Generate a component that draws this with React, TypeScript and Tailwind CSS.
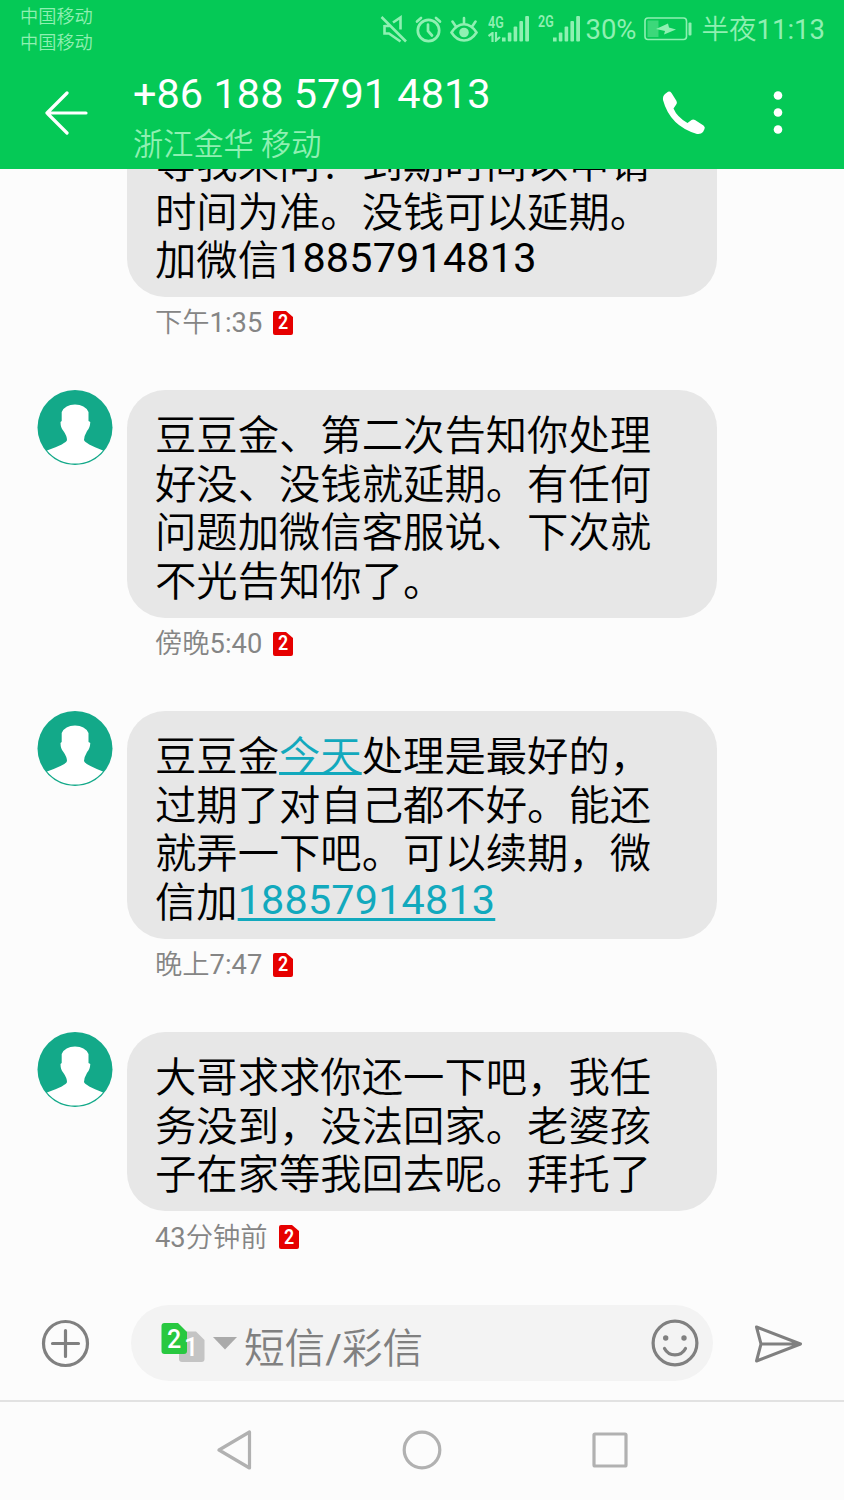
import React from "react";

type Part = { text: string; link?: boolean; latin?: boolean };

type MessageType = {
    id: number;
    lines: Part[][];
    time: string[];
    avatar: boolean;
}

const messages: MessageType[] = [
    {
        id: 1,
        avatar: false,
        lines: [
            [{ text: "等我来问？到期时间以申请" }],
            [{ text: "时间为准。没钱可以延期。" }],
            [{ text: "加微信" }, { text: "18857914813", latin: true }],
        ],
        time: ["下午", "1:35"],
    },
    {
        id: 2,
        avatar: true,
        lines: [
            [{ text: "豆豆金、第二次告知你处理" }],
            [{ text: "好没、没钱就延期。有任何" }],
            [{ text: "问题加微信客服说、下次就" }],
            [{ text: "不光告知你了。" }],
        ],
        time: ["傍晚", "5:40"],
    },
    {
        id: 3,
        avatar: true,
        lines: [
            [{ text: "豆豆金" }, { text: "今天", link: true }, { text: "处理是最好的，" }],
            [{ text: "过期了对自己都不好。能还" }],
            [{ text: "就弄一下吧。可以续期，微" }],
            [{ text: "信加" }, { text: "18857914813", link: true, latin: true }],
        ],
        time: ["晚上", "7:47"],
    },
    {
        id: 4,
        avatar: true,
        lines: [
            [{ text: "大哥求求你还一下吧，我任" }],
            [{ text: "务没到，没法回家。老婆孩" }],
            [{ text: "子在家等我回去呢。拜托了" }],
        ],
        time: ["", "43", "分钟前"],
    },
];

const Signal = () => (
    <svg width="28" height="26" viewBox="0 0 28 26" fill="currentColor">
        <rect x="0" y="21.5" width="3.6" height="4" />
        <rect x="5.8" y="16.5" width="3.6" height="9" rx="1" />
        <rect x="11.6" y="10.5" width="3.6" height="15" rx="1" />
        <rect x="17.4" y="5" width="3.6" height="20.5" rx="1" />
        <rect x="23.2" y="0" width="3.8" height="25.5" rx="1" />
    </svg>
);

const StatusBar = () => (
    <div className="flex h-[58px] justify-between pl-5 pr-[19px] text-[#8ff0b2]">
        <div className="pt-[4px] text-[18.2px] font-[350] leading-[25.5px]">
            <div>中国移动</div>
            <div>中国移动</div>
        </div>
        <div className="flex items-center">
            <svg className="mr-[8px]" width="27" height="28" viewBox="0 0 27 28" fill="none" stroke="currentColor" strokeWidth="2.6">
                <path d="M1.5 2L26 26.5M4.5 10V18.5H9L20.5 26.5M4.5 11H10M13 7.5L20.5 2.5V14.5" />
            </svg>
            <svg className="mr-[8px]" width="27" height="27" viewBox="0 0 27 27" fill="none" stroke="currentColor" strokeWidth="2.7" strokeLinecap="round">
                <circle cx="13.5" cy="14.5" r="10.7" />
                <path d="M2 5.5L6 2M25 5.5L21 2M13 8.5V15l4 4.5" />
            </svg>
            <svg className="mr-[10px]" width="28" height="27" viewBox="0 0 28 27" fill="none" stroke="currentColor" strokeWidth="2.6" strokeLinecap="round">
                <path d="M1.5 16.5C5 11 9 8.3 14 8.3s9 2.7 12.5 8.2C23 22 19 24.5 14 24.5S5 22 1.5 16.5ZM14 8V2M5.500 10L2.500 5.500M22.500 10L25.500 5.500" />
                <circle cx="14" cy="16.5" r="4.8" fill="currentColor" stroke="none" />
            </svg>
            <div className="flex items-end">
                <div className="flex w-[14px] flex-col items-start gap-[3px]">
                    <span className="origin-left scale-x-[0.78] text-[16px] font-semibold leading-[13px]">4G</span>
                    <svg width="13" height="10" viewBox="0 0 13 10" fill="none" stroke="currentColor" strokeWidth="2.2">
                        <path d="M.5 4L4.5 1V10M8 0V8.5L12 5" />
                    </svg>
                </div>
                <Signal />
            </div>
            <div className="ml-[8px] flex items-start">
                <span className="w-[15px] origin-left scale-x-[0.78] text-[16px] font-semibold leading-[12px]">2G</span>
                <Signal />
            </div>
            <span className="ml-[4px] pt-[2px] text-[27.5px] leading-none">30%</span>
            <svg className="ml-[7px]" width="48" height="24" viewBox="0 0 48 24">
                <rect x="1" y="1" width="41.5" height="21.5" rx="3" fill="none" stroke="currentColor" strokeWidth="1.6" />
                <rect x="3.5" y="3.5" width="11" height="16.5" fill="currentColor" opacity="0.4" />
                <path d="M12 12L24 6.5L25 10.5L32 12.5L20 17.5L21 14Z" fill="currentColor" />
                <rect x="44.5" y="5.5" width="3" height="13" rx="1" fill="currentColor" />
            </svg>
            <span className="ml-[10px] whitespace-nowrap pt-[2px] text-[27.5px] leading-none">
                <span className="font-[350]">半夜</span>11:13
            </span>
        </div>
    </div>
);

const Header = () => (
    <header className="z-10 h-[169px] shrink-0 bg-[#05c956]">
        <StatusBar />
        <div className="flex h-[110px] items-center pl-[45px]">
            <svg width="43" height="44" viewBox="0 0 43 44" fill="none" stroke="#fff" strokeWidth="3.2" strokeLinecap="round" strokeLinejoin="round">
                <path d="M41 22H2M22 2L2 22L22 42" />
            </svg>
            <div className="ml-[45px] w-[530px] pt-[9px]">
                <div className="whitespace-nowrap text-[41.5px] leading-[50px] text-white">+86 188 5791 4813</div>
                <div className="pt-[3px] text-[30.2px] font-[350] leading-[45px] text-[#8ff0b2]">浙江金华 移动</div>
            </div>
            <svg className="-ml-px" width="45" height="44" viewBox="0 0 45 44" fill="#fff">
                <path d="M3 3L6 .8Q8 0 9.5 2L14.5 10Q15.5 12 14.2 13.5L11.5 17.5Q15 26 25.5 32L29.5 29Q31 28 33 29L41.5 34.5Q43.5 36 42.5 38L41 41Q39 43.5 35 43Q8 35 1 9Q.5 5 3 3Z" />
            </svg>
            <svg className="ml-[66px]" width="10" height="44" viewBox="0 0 10 44" fill="#fff">
                <circle cx="5" cy="4.5" r="4.3" />
                <circle cx="5" cy="21.5" r="4.3" />
                <circle cx="5" cy="38.5" r="4.3" />
            </svg>
        </div>
    </header>
);

const Avatar = () => (
    <svg width="76" height="76" viewBox="0 0 76 76">
        <circle cx="38" cy="37.5" r="37.5" fill="#13a989" />
        <path d="M10 60.500Q29.500 53.500 30 50Q30 46 26.500 41Q23.500 38 23.500 32L24.700 31V22Q28 14.500 38 14.500T51.500 22V31L53.300 32Q53 38 50 41Q47 46 47 50Q48 53.500 66 60.500A36.500 36.500 0 0 1 10 60.500Z" fill="#fff" />
    </svg>
);

const SimBadge = () => (
    <span className="relative flex h-6 w-[20px] items-center justify-center text-white">
        <svg className="absolute inset-0" width="20" height="24" viewBox="0 0 20 24" fill="#e60000">
            <path d="M2 0H13L20 6V22Q20 24 18 24H2Q0 24 0 22V2Q0 0 2 0Z" />
        </svg>
        <span className="relative scale-x-[0.85] text-[21px] font-semibold leading-none">2</span>
    </span>
);

const LinePart = ({ part }: { part: Part }) => {
    if (part.link) {
        return part.latin
            ? <a className="relative -top-[3px] tracking-[0.18px] text-[#12a9bd] underline decoration-[2.5px] underline-offset-[4px]">{part.text}</a>
            : <a className="font-[350] text-[#12a9bd] underline decoration-[2.5px] underline-offset-[1px]">{part.text}</a>;
    }
    return part.latin
        ? <span className="relative -top-[3px] tracking-[0.18px]">{part.text}</span>
        : <span className="font-[350]">{part.text}</span>;
}

const Message = ({ data }: { data: MessageType }) => (
    <div className="flex h-fit shrink-0 pl-[37px]">
        <div className="w-[90px] shrink-0">{data.avatar && <Avatar />}</div>
        <div>
            <div className="w-[590px] rounded-[38px] bg-[#e7e7e7] pb-[11px] pl-[28px] pt-[22px] text-[41.35px] leading-[48.6px] text-black">
                {data.lines.map((line, i) => (
                    <p key={i} className="whitespace-nowrap">
                        {line.map((part, j) => <LinePart key={j} part={part} />)}
                    </p>
                ))}
            </div>
            <div className="flex h-[52px] items-center pl-[28px]">
                <span className="mr-[11px] pt-[2px] text-[27.3px] text-[#858585]">
                    <span className="font-[350]">{data.time[0]}</span>
                    {data.time[1]}
                    <span className="font-[350]">{data.time[2]}</span>
                </span>
                <SimBadge />
            </div>
        </div>
    </div>
);

const Composer = () => (
    <div className="flex h-[76px] shrink-0 items-center pl-[41px]">
        <svg width="49" height="49" viewBox="0 0 49 49" fill="none" stroke="#808080" strokeWidth="3.2" strokeLinecap="round">
            <circle cx="24.5" cy="24.5" r="22" />
            <path d="M24.5 11.5V37.5M11.5 24.5H37.5" />
        </svg>
        <div className="ml-[41px] flex h-[76px] w-[582px] items-center rounded-full bg-[#f3f3f3] pl-[30px]">
            <div className="relative h-[40px] w-[44px]">
                <svg className="absolute inset-0" width="44" height="40" viewBox="0 0 44 40">
                    <path d="M20 8.5H35L43.5 17V36Q43.5 39 40.5 39H21Q18 39 18 36V8.5Z" fill="#c4c4c4" />
                    <path d="M3.5 0H17L26 9V28Q26 31 23 31H3.5Q.5 31 .5 28V3Q.5 0 3.5 0Z" fill="#28c840" />
                </svg>
                <span className="absolute left-[6px] top-[3px] text-[25px] font-medium leading-[27px] text-white">2</span>
                <span className="absolute left-[23px] top-[11px] text-[25px] font-medium leading-[27px] text-white">1</span>
            </div>
            <svg className="ml-[8px]" width="24" height="13" viewBox="0 0 24 13" fill="#aaa">
                <path d="M0 0H24L12 12.5Z" />
            </svg>
            <span className="ml-[7px] w-[407px] whitespace-nowrap pt-[11px] text-[40.6px] font-[350] leading-[60px] text-[#808080]">
                短信<span className="font-normal">/</span>彩信
            </span>
            <svg className="shrink-0" width="48" height="48" viewBox="0 0 48 48" fill="none" stroke="#808080" strokeWidth="3.2" strokeLinecap="round">
                <circle cx="24" cy="24" r="21.9" />
                <path d="M13.5 29.5C18 38 30 38 34.5 29.5" />
                <circle cx="14.7" cy="19" r="2.7" fill="#808080" stroke="none" />
                <circle cx="33" cy="19" r="2.7" fill="#808080" stroke="none" />
            </svg>
        </div>
        <svg className="ml-[42px] mt-px" width="47" height="38" viewBox="0 0 47 38" fill="none" stroke="#808080" strokeWidth="3" strokeLinejoin="round">
            <path d="M1.5 2L45.5 19L1.5 36L6 19ZM6 19H45" />
        </svg>
    </div>
);

const NavBar = () => (
    <nav className="flex h-[100px] shrink-0 items-center justify-between border-t-2 border-[#e2e2e2] pb-[2px] pl-[217px] pr-[216px]">
        <svg width="35" height="40" viewBox="0 0 35 40" fill="none" stroke="#b1b1b1" strokeWidth="3.2" strokeLinejoin="round">
            <path d="M2 20L32.5 2V38Z" />
        </svg>
        <svg width="40" height="40" viewBox="0 0 40 40" fill="none" stroke="#b1b1b1" strokeWidth="3.2">
            <circle cx="20" cy="20" r="17.8" />
        </svg>
        <svg width="36" height="36" viewBox="0 0 36 36" fill="none" stroke="#b1b1b1" strokeWidth="3.2" strokeLinejoin="round">
            <rect x="2" y="2" width="32" height="32" rx="1" />
        </svg>
    </nav>
);

const App = () => {
    return (
        <div className="flex h-[1500px] w-[844px] flex-col overflow-hidden bg-[#fcfcfc] font-[Roboto,'Noto_Sans_CJK_SC',sans-serif]">
            <Header />
            <main className="flex min-h-0 flex-1 flex-col justify-end gap-[41.6px] overflow-hidden pb-[42px]">
                {messages.map((message) => (
                    <Message key={message.id} data={message} />
                ))}
            </main>
            <Composer />
            <div className="h-[19px] shrink-0" />
            <NavBar />
        </div>
    );
}

export default App;
